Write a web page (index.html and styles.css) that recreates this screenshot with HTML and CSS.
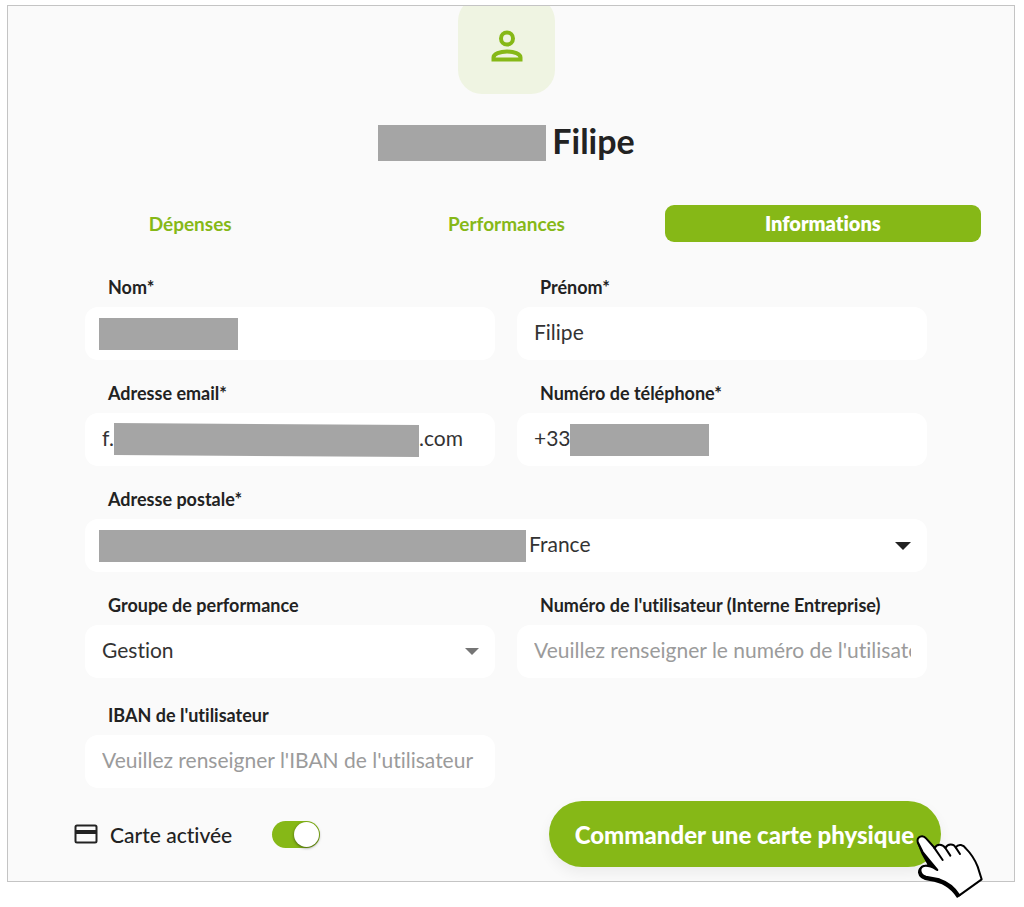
FILE: index.html
```html
<!DOCTYPE html>
<html lang="fr">
<head>
    <meta charset="UTF-8">
    <meta name="viewport" content="width=device-width, initial-scale=1.0">
    <title>Filipe - Informations</title>
    <link rel="stylesheet" href="styles.css">
</head>
<body>
    <main class="panel">
        <header class="profile">
            <div class="avatar-clip">
                <div class="avatar">
                    <svg viewBox="0 0 32 32" width="32" height="32" fill="none" stroke="currentColor" stroke-width="4" aria-hidden="true">
                        <circle cx="16" cy="8.5" r="6"/>
                        <path d="M2.5 29.500V27.500C2.500 24 9 21.500 16 21.500S29.500 24 29.500 27.500V29.500Z"/>
                    </svg>
                </div>
            </div>
            <h1><span class="mask mask-title"></span>Filipe</h1>
        </header>

        <nav class="tabs">
            <a class="tab" href="#depenses">Dépenses</a>
            <a class="tab" href="#performances">Performances</a>
            <a class="tab active" href="#informations">Informations</a>
        </nav>

        <form>
            <div class="form-grid">
                <div class="field">
                    <label for="nom">Nom*</label>
                    <div class="control">
                        <span class="mask mask-short"></span>
                        <input type="text" id="nom">
                    </div>
                </div>
                <div class="field">
                    <label for="prenom">Prénom*</label>
                    <div class="control">
                        <input type="text" id="prenom" value="Filipe">
                    </div>
                </div>
                <div class="field">
                    <label for="email" id="email-label">Adresse email*</label>
                    <div class="control">
                        <input class="email-start" type="text" id="email" value="f.">
                        <span class="mask mask-email"></span>
                        <input class="flush" type="text" value=".com" aria-labelledby="email-label">
                    </div>
                </div>
                <div class="field">
                    <label for="telephone">Numéro de téléphone*</label>
                    <div class="control">
                        <input class="phone-start" type="tel" id="telephone" value="+33">
                        <span class="mask mask-short"></span>
                    </div>
                </div>
                <div class="field wide">
                    <label for="adresse">Adresse postale*</label>
                    <div class="control">
                        <span class="mask mask-address"></span>
                        <select id="adresse">
                            <option>France</option>
                        </select>
                        <svg class="arrow" viewBox="0 0 16 8" width="16" height="8" aria-hidden="true"><path d="M0 0H16L8 8Z" fill="currentColor"/></svg>
                    </div>
                </div>
                <div class="field">
                    <label for="groupe">Groupe de performance</label>
                    <div class="control">
                        <select id="groupe">
                            <option>Gestion</option>
                        </select>
                        <svg class="arrow muted" viewBox="0 0 16 8" width="14" height="7" aria-hidden="true"><path d="M0 0H16L8 8Z" fill="currentColor"/></svg>
                    </div>
                </div>
                <div class="field">
                    <label for="numero">Numéro de l'utilisateur (Interne Entreprise)</label>
                    <div class="control">
                        <input type="text" id="numero" placeholder="Veuillez renseigner le numéro de l'utilisateur">
                    </div>
                </div>
            </div>

            <div class="form-grid bank">
                <div class="field">
                    <label for="iban">IBAN de l'utilisateur</label>
                    <div class="control">
                        <input type="text" id="iban" placeholder="Veuillez renseigner l'IBAN de l'utilisateur">
                    </div>
                </div>
            </div>

            <div class="actions">
                <label class="card-toggle">
                    <svg viewBox="0 0 24 20" width="24" height="20" aria-hidden="true">
                        <rect x="1.500" y="1.500" width="21" height="17" rx="1.500" fill="none" stroke="currentColor" stroke-width="2"/>
                        <path d="M1.500 6H22.500V10H1.500Z" fill="currentColor"/>
                    </svg>
                    Carte activée
                    <input type="checkbox" class="switch" checked>
                </label>
                <div class="order">
                    <button type="button">Commander une carte physique</button>
                    <svg class="pointer" viewBox="0 0 240 228" width="80" height="76" stroke="#000" stroke-linecap="round" stroke-linejoin="round" aria-hidden="true">
                        <path d="M24 50L38 84L58 120C42 118 26 124 27 140C29 156 42 160 60 162C98 167 124 184 142 212L150 206L82 128L46 40Z" fill="#000" stroke-width="6"/>
                        <path d="M23 48C20 32 38 24 49 38L74 66C80 54 96 52 106 66C114 52 130 52 137 64C146 52 160 56 168 68C184 84 196 104 203 122L215 160L148 208C134 184 112 168 88 160L48 152C28 146 26 124 42 120C58 117 68 124 82 132L62 108L38 78Z" fill="#fff" stroke-width="6"/>
                        <path d="M72 64L98 102M106 66L121 89M137 64L150 84" fill="none" stroke-width="6"/>
                    </svg>
                </div>
            </div>
        </form>
    </main>
</body>
</html>
```
FILE: styles.css
```css
* {
    margin: 0;
    padding: 0;
    box-sizing: border-box;
}

body {
    font-family: Lato, "Noto Sans", sans-serif;
    font-variant-ligatures: none;
    background: #fff;
    padding: 5px 9px 26px 7px;
    color: #222;
}

.panel {
    background: #fafafa;
    border: 1px solid #c4c4c4;
    padding: 0 33px 14px 24px;
}

.avatar-clip {
    overflow: hidden;
}

.avatar {
    width: 97px;
    height: 97px;
    margin: -9px auto 0;
    border-radius: 24px;
    background: #eff4e2;
    color: #86b817;
    display: flex;
    align-items: center;
    justify-content: center;
}

h1 {
    display: flex;
    justify-content: center;
    gap: 6px;
    height: 36px;
    margin-top: 31px;
    font-size: 34px;
    line-height: 32px;
    font-weight: 700;
}

.mask {
    flex: none;
    height: 32px;
    background: #a5a5a5;
}

.mask-title {
    width: 168px;
    height: 36px;
}

.mask-short {
    width: 139px;
}

.mask-email {
    width: 305px;
    transform: skewY(0.4deg);
}

.mask-address {
    width: 427px;
}

.tabs {
    display: grid;
    grid-template-columns: repeat(3, 1fr);
    margin-top: 44px;
}

.tab {
    height: 37px;
    border-radius: 9px;
    font-size: 19px;
    line-height: 37px;
    font-weight: 700;
    text-align: center;
    text-decoration: none;
    color: #86b817;
}

.tab.active {
    background: #86b817;
    font-size: 20px;
    font-weight: 800;
    color: #fff;
}

form {
    padding: 32px 54px 0 53px;
}

.form-grid {
    display: grid;
    grid-template-columns: repeat(2, minmax(0, 1fr));
    gap: 20px 22px;
}

.form-grid.bank {
    margin-top: 24px;
}

.wide {
    grid-column: 1 / -1;
}

.field label {
    display: block;
    padding: 0 23px 7px;
    font-size: 18px;
    line-height: 26px;
    font-weight: 700;
}

.control {
    display: flex;
    align-items: center;
    height: 53px;
    padding: 0 16px 0 14px;
    border-radius: 13px;
    background: #fff;
}

.control input,
.control select {
    flex: 1;
    min-width: 0;
    height: 36px;
    padding: 0 0 5px 3px;
    border: none;
    outline: none;
    background: transparent;
    appearance: none;
    font: inherit;
    font-size: 21px;
    color: #333;
}

.control input::placeholder {
    color: #9b9b9b;
}

.control .email-start {
    flex: 0 0 15px;
}

.control .phone-start {
    flex: 0 0 39px;
}

.control .flush {
    padding-left: 0;
}

.arrow {
    flex: none;
    color: #222;
}

.arrow.muted {
    color: #757575;
}

.actions {
    display: flex;
    align-items: center;
    justify-content: space-between;
    margin: 13px -14px 0 -11px;
}

.card-toggle {
    display: flex;
    align-items: center;
    gap: 12px;
    font-size: 21px;
    font-weight: 500;
}

.switch {
    appearance: none;
    width: 48px;
    height: 27px;
    margin-left: 28px;
    padding: 1px;
    border-radius: 14px;
    background: #86b817;
    display: flex;
    justify-content: flex-end;
}

.switch::before {
    content: "";
    width: 25px;
    height: 25px;
    border-radius: 50%;
    background: #fff;
    box-shadow: 0 1px 3px rgba(0, 0, 0, 0.5);
}

.switch:not(:checked) {
    justify-content: flex-start;
    background: #bbb;
}

.order {
    position: relative;
}

.order button {
    height: 66px;
    padding: 0 27px 0 26px;
    border: none;
    border-radius: 33px;
    background: #86b817;
    box-shadow: 0 6px 14px rgba(0, 0, 0, 0.06);
    color: #fff;
    font: inherit;
    font-size: 24px;
    font-weight: 900;
}

/* Hand cursor over the end of the button */
.pointer {
    position: absolute;
    right: -49px;
    bottom: -35px;
    pointer-events: none;
}
```
